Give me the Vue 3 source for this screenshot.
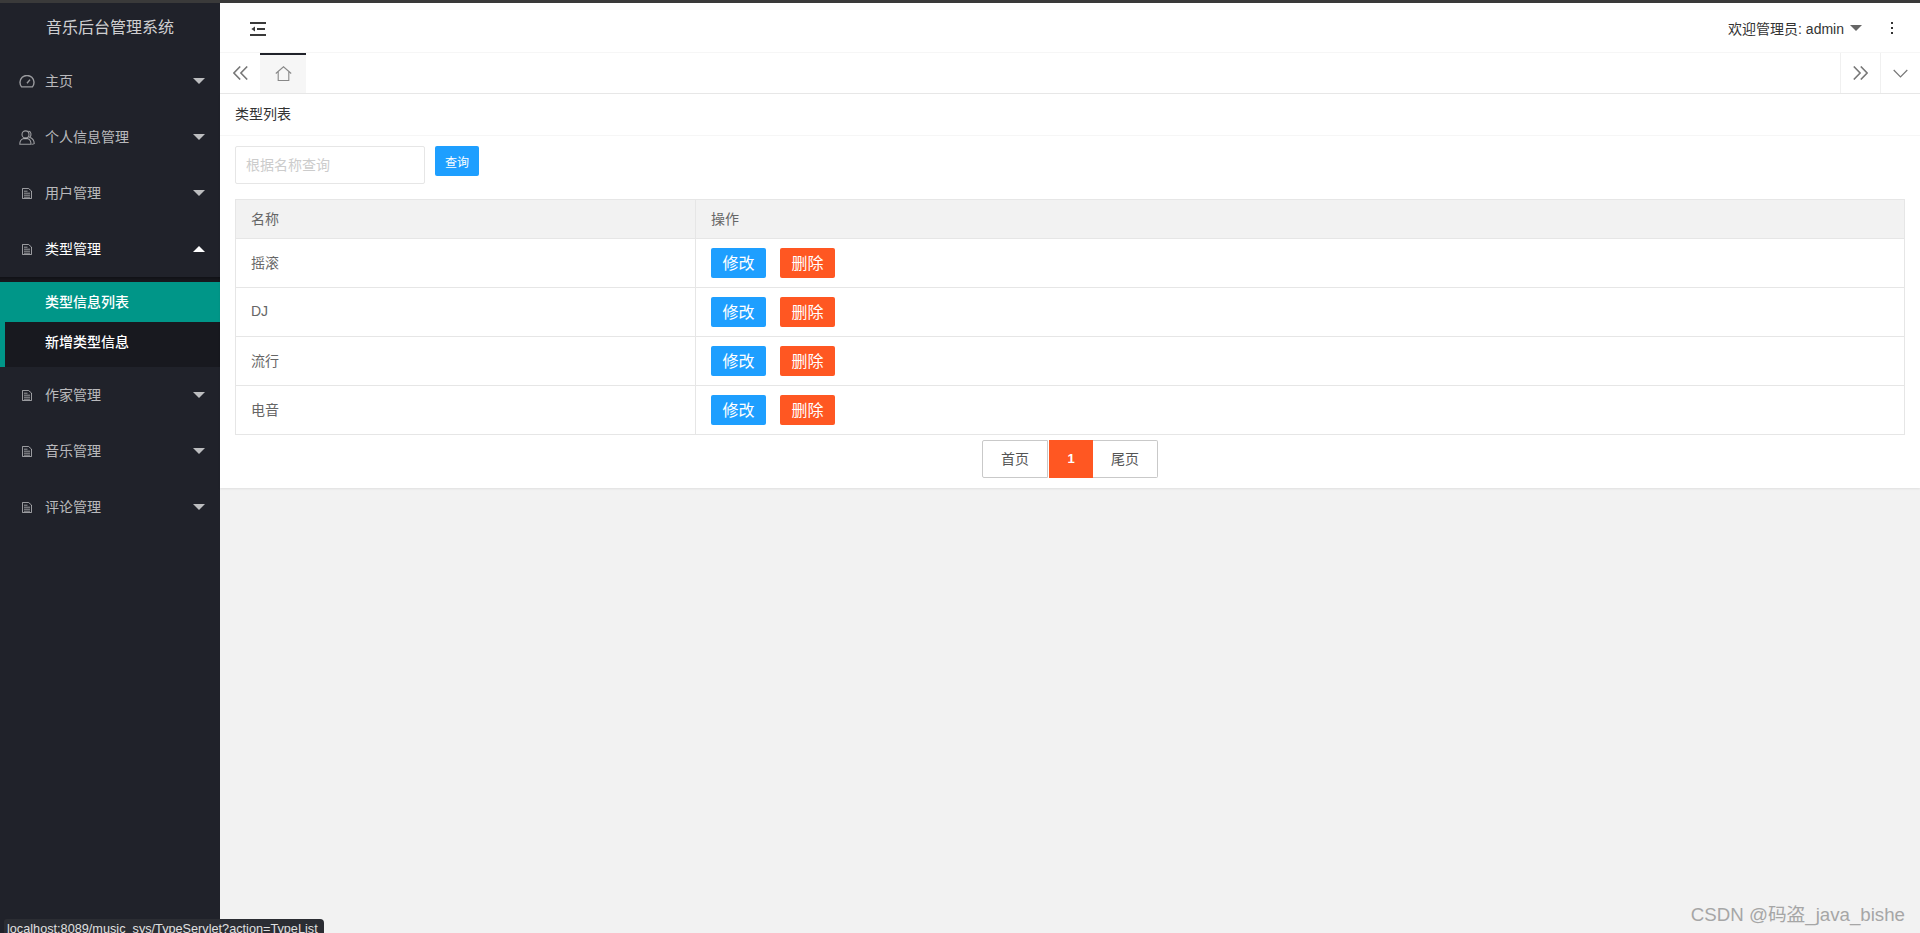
<script setup>
const menus = [
  { label: '主页', icon: 'gauge' },
  { label: '个人信息管理', icon: 'user' },
  { label: '用户管理', icon: 'doc' },
  { label: '类型管理', icon: 'doc', open: true, children: ['类型信息列表', '新增类型信息'] },
  { label: '作家管理', icon: 'doc' },
  { label: '音乐管理', icon: 'doc' },
  { label: '评论管理', icon: 'doc' }
]
const rows = ['摇滚', 'DJ', '流行', '电音']
</script>

<template>
  <div class="page">
    <div class="top-strip"></div>
    <div class="shell">
      <aside class="side">
        <div class="logo">音乐后台管理系统</div>
        <template v-for="m in menus" :key="m.label">
          <div class="item" :class="{ open: m.open }">
            <span class="item-icon">
              <svg v-if="m.icon === 'gauge'" width="16" height="13" viewBox="0 0 16 13" fill="none" stroke="currentColor" stroke-width="1.4">
                <path d="M2.600 11.900h10.800a7 7 0 1 0-10.800 0z" />
                <path d="M8 8.200 11 4.600" />
              </svg>
              <svg v-else-if="m.icon === 'user'" width="16" height="15" viewBox="0 0 16 15" fill="none" stroke="currentColor" stroke-width="1.100">
                <circle cx="6.500" cy="4.400" r="3.500" />
                <path d="M.8 14.200c0-3.200 1.800-5 3.600-5.600h4.200c1.800.6 3.400 2.400 3.400 5.600z" />
                <path d="M9.600 1c2.800.6 3.200 4.600 1 6.200 2.400.8 4.600 2.800 4.600 6.400-.6.400-1.400.6-2.400.6" />
              </svg>
              <svg v-else class="doc" width="10" height="11" viewBox="0 0 10 11" fill="none" stroke="currentColor" stroke-width="1">
                <path d="M.5.500h6l3 2.500v7.500h-9z" />
                <path d="M2 3.200h3.500M2 5.200h6M2 7.200h6M2 9.200h6" />
              </svg>
            </span>
            <span class="item-label">{{ m.label }}</span>
            <span class="arrow" :class="{ up: m.open }"></span>
          </div>
          <div v-if="m.children" class="sub">
            <div class="sub-on">{{ m.children[0] }}</div>
            <div class="sub-off"><span>{{ m.children[1] }}</span></div>
          </div>
        </template>
      </aside>

      <main class="main">
        <header class="head">
          <svg class="shrink" width="16" height="14" viewBox="0 0 16 14">
            <path fill="#3a3a3a" d="M0 0h16v2H0zM7 6h8v2H7zM0 12h16v2H0z" />
            <path fill="#3a3a3a" d="M5 4.400v5.200L1.400 7z" />
          </svg>
          <div class="head-right">
            <span class="welcome">欢迎管理员: admin</span>
            <span class="caret"></span>
            <span class="dots"><i></i><i></i><i></i></span>
          </div>
        </header>

        <nav class="tabs">
          <span class="tab-btn">
            <svg width="15" height="14" viewBox="0 0 15 14" fill="none" stroke="#777" stroke-width="1.600">
              <path d="M7.200 .5 .9 7l6.300 6.500M14.200 .5 7.900 7l6.300 6.500" />
            </svg>
          </span>
          <span class="tab-home">
            <svg width="17" height="15" viewBox="0 0 17 15" fill="none" stroke="#888" stroke-width="1.100">
              <path d="M.8 7.500 8.500.8 16.200 7.500M3.200 5.700v8.800h10.600V5.700" />
            </svg>
          </span>
          <span class="tab-fill"></span>
          <span class="tab-end">
            <svg width="15" height="14" viewBox="0 0 15 14" fill="none" stroke="#777" stroke-width="1.600">
              <path d="M.8 .5 7.100 7 .8 13.500M7.800 .5 14.100 7l-6.300 6.500" />
            </svg>
          </span>
          <span class="tab-end">
            <svg width="15" height="9" viewBox="0 0 15 9" fill="none" stroke="#777" stroke-width="1.200">
              <path d="M.7 1 7.500 7.800 14.300 1" />
            </svg>
          </span>
        </nav>

        <section class="card">
          <div class="card-head">类型列表</div>
          <div class="card-body">
            <div class="search">
              <input class="search-input" placeholder="根据名称查询" />
              <button class="query">查询</button>
            </div>
            <table class="grid">
              <colgroup><col class="col-name" /><col /></colgroup>
              <thead>
                <tr><th>名称</th><th>操作</th></tr>
              </thead>
              <tbody>
                <tr v-for="r in rows" :key="r">
                  <td>{{ r }}</td>
                  <td class="op-cell">
                    <div class="ops">
                      <button class="btn blue">修改</button>
                      <button class="btn orange">删除</button>
                    </div>
                  </td>
                </tr>
              </tbody>
            </table>
            <div class="pager">
              <span class="pg">首页</span>
              <span class="pg cur">1</span>
              <span class="pg last">尾页</span>
            </div>
          </div>
        </section>
      </main>
    </div>
    <div class="status">localhost:8089/music_sys/TypeServlet?action=TypeList</div>
    <div class="mark">CSDN @码盗_java_bishe</div>
  </div>
</template>

<style>
html, body { margin: 0; height: 100%; overflow: hidden; }
</style>

<style scoped>
.page {
  position: relative;
  width: 1920px;
  height: 933px;
  overflow: hidden;
  display: flex;
  flex-direction: column;
  font-family: "Liberation Sans", "Noto Sans CJK SC", sans-serif;
  font-size: 14px;
  color: #666;
  background: #f2f2f2;
}
.top-strip { height: 3px; background: #3a3a3a; flex: none; }
.shell { flex: 1; display: flex; min-height: 0; }

.side { width: 220px; flex: none; background: #20222a; }
.logo {
  height: 50px;
  line-height: 50px;
  box-sizing: border-box;
  padding-left: 46px;
  font-size: 16px;
  color: rgba(255, 255, 255, .8);
}
.item {
  height: 56px;
  display: flex;
  align-items: center;
  color: rgba(255, 255, 255, .7);
}
.item.open { color: #fff; }
.item-icon {
  width: 45px;
  flex: none;
  display: flex;
  justify-content: center;
  padding-left: 9px;
  box-sizing: border-box;
  color: rgba(255, 255, 255, .55);
}
.doc { margin-top: 1px; }
.item-label { flex: 1; padding-bottom: 2px; }
.arrow {
  width: 0;
  height: 0;
  margin-right: 15px;
  border-left: 6px solid transparent;
  border-right: 6px solid transparent;
  border-top: 6px solid rgba(255, 255, 255, .7);
}
.arrow.up {
  border-top: 0;
  border-bottom: 6px solid #fff;
}
.sub {
  background: #18191f;
  padding-top: 5px;
  box-shadow: inset 0 4px 3px -2px rgba(0, 0, 0, .3);
  font-weight: 500;
  color: #fff;
}
.sub-on {
  height: 40px;
  line-height: 40px;
  padding-left: 45px;
  background: #009688;
}
.sub-off {
  height: 45px;
  line-height: 40px;
  padding-left: 40px;
  border-left: 5px solid #009688;
}

.main { flex: 1; min-width: 0; display: flex; flex-direction: column; }
.head {
  height: 50px;
  box-sizing: border-box;
  background: #fff;
  border-bottom: 1px solid #f6f6f6;
  display: flex;
  align-items: center;
  justify-content: space-between;
  padding-left: 30px;
}
.shrink { display: block; margin-top: 3px; }
.head-right { display: flex; align-items: center; color: #333; }
.welcome { font-size: 14px; }
.caret {
  width: 0;
  height: 0;
  margin-left: 6px;
  border-left: 6px solid transparent;
  border-right: 6px solid transparent;
  border-top: 6px solid #666;
}
.dots {
  display: flex;
  flex-direction: column;
  gap: 3px;
  margin-left: 29px;
  margin-right: 27px;
}
.dots i { width: 2px; height: 2px; background: #333; display: block; }

.tabs {
  height: 41px;
  box-sizing: border-box;
  background: #fff;
  border-bottom: 1px solid #e8e8e8;
  display: flex;
}
.tab-btn { width: 40px; display: flex; align-items: center; justify-content: center; }
.tab-home {
  width: 46px;
  box-sizing: border-box;
  background: #f6f6f6;
  border-top: 2px solid #20222a;
  padding-bottom: 2px;
  display: flex;
  align-items: center;
  justify-content: center;
}
.tab-fill { flex: 1; }
.tab-end {
  width: 39px;
  border-left: 1px solid #f0f0f0;
  display: flex;
  align-items: center;
  justify-content: center;
}

.card { background: #fff; box-shadow: 0 1px 2px rgba(0, 0, 0, .08); }
.card-head {
  height: 42px;
  line-height: 41px;
  box-sizing: border-box;
  padding-left: 15px;
  color: #333;
  border-bottom: 1px solid #f6f6f6;
}
.card-body { padding: 10px 15px; }
.search { display: flex; align-items: flex-start; gap: 10px; }
.search-input {
  width: 190px;
  height: 38px;
  box-sizing: border-box;
  border: 1px solid #e6e6e6;
  border-radius: 2px;
  padding: 0 10px;
  font: inherit;
  outline: none;
}
.search-input::placeholder { color: #ccc; opacity: 1; }
.query {
  width: 44px;
  height: 30px;
  padding: 0;
  border: 0;
  border-radius: 2px;
  background: #1e9fff;
  color: #fff;
  font: inherit;
  font-size: 12px;
}

.grid {
  width: 100%;
  margin-top: 15px;
  border-collapse: collapse;
  table-layout: fixed;
}
.col-name { width: 460px; }
.grid th, .grid td {
  border: 1px solid #e6e6e6;
  padding: 0 15px 2px;
  text-align: left;
  font-weight: 400;
  color: #666;
}
.grid .op-cell { padding: 0 15px; }
.grid th { height: 36px; background: #f2f2f2; }
.grid td { height: 46px; }
.grid .op-cell { height: 48px; }
.ops { display: flex; gap: 14px; }
.btn {
  width: 55px;
  height: 30px;
  padding: 0 0 2px;
  border: 0;
  border-radius: 2px;
  color: #fff;
  font: inherit;
  font-size: 16px;
}
.btn.blue { background: #1e9fff; }
.btn.orange { background: #ff5722; }

.pager {
  margin-top: 5px;
  display: flex;
  justify-content: center;
}
.pg {
  height: 38px;
  width: 66px;
  box-sizing: border-box;
  line-height: 36px;
  text-align: center;
  background: #fff;
  color: #555;
  font-size: 14px;
  border: 1px solid #c9c9c9;
  border-radius: 2px 0 0 2px;
}
.pg.cur {
  width: 44px;
  line-height: 38px;
  border: 0;
  border-radius: 0;
  margin-left: 1px;
  background: #ff5722;
  color: #fff;
  font-weight: 700;
  font-size: 13px;
}
.pg.last {
  width: 65px;
  border-left: 0;
  border-radius: 0 2px 2px 0;
}

.status {
  position: absolute;
  left: 4px;
  bottom: 0;
  height: 14px;
  box-sizing: border-box;
  padding: 0 3px;
  width: 320px;
  background: #2b2d33;
  color: #e0e0e0;
  font-size: 12.700px;
  line-height: 21px;
  white-space: nowrap;
  overflow: hidden;
  border-radius: 3px 4px 0 0;
}
.mark {
  position: absolute;
  right: 15px;
  bottom: 7px;
  font-size: 18.700px;
  color: #a6a6a6;
  white-space: nowrap;
}
</style>
